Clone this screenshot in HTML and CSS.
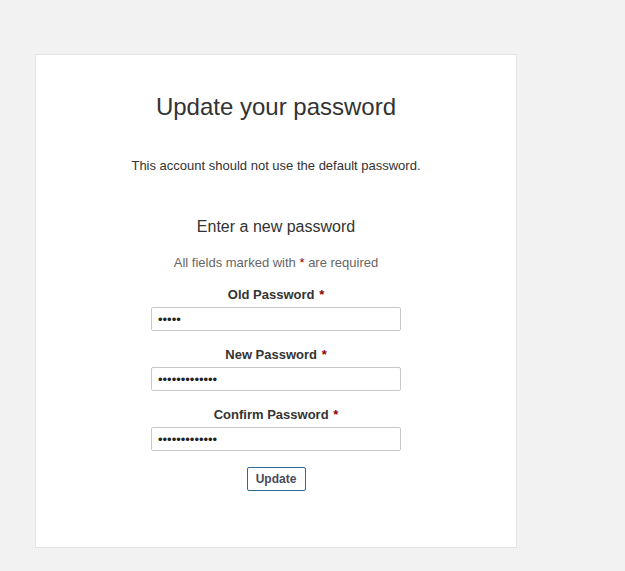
FILE: index.html
```html
<!DOCTYPE html>
<html lang="en">
<head>
<meta charset="utf-8">
<title>Update your password</title>
<link rel="stylesheet" href="styles.css">
</head>
<body>
<div class="card">
  <h1 class="title">Update your password</h1>
  <p class="notice">This account should not use the default password.</p>
  <h2 class="subtitle">Enter a new password</h2>
  <p class="note">All fields marked with <span class="req">*</span> are required</p>
  <form class="form">
    <label class="label" for="old">Old Password <span class="req">*</span></label>
    <input class="field" id="old" type="password" value="aaaaa">
    <label class="label" for="new">New Password <span class="req">*</span></label>
    <input class="field" id="new" type="password" value="aaaaaaaaaaaaa">
    <label class="label" for="confirm">Confirm Password <span class="req">*</span></label>
    <input class="field" id="confirm" type="password" value="aaaaaaaaaaaaa">
    <button class="btn" type="button">Update</button>
  </form>
</div>
</body>
</html>
```
FILE: styles.css
```css
html, body {
  margin: 0;
  padding: 0;
  background: #f2f2f2;
  font-family: "Liberation Sans", Arial, sans-serif;
  color: #333;
}
.card {
  box-sizing: border-box;
  width: 482px;
  height: 494px;
  margin: 54px 0 0 35px;
  padding-top: 38px;
  background: #fff;
  border: 1px solid #e4e4e4;
  display: flex;
  flex-direction: column;
  align-items: center;
  text-align: center;
}
.title {
  margin: 0;
  font-size: 24px;
  line-height: 28px;
  font-weight: normal;
  color: #333;
}
.notice {
  margin: 35px 0 0;
  font-size: 13px;
  line-height: 20px;
  color: #333;
}
.subtitle {
  margin: 40px 0 0;
  font-size: 16px;
  line-height: 22px;
  font-weight: normal;
  color: #333;
}
.note {
  margin: 16px 0 0;
  font-size: 13px;
  line-height: 18px;
  color: #666;
}
.req {
  color: #8b0000;
  font-weight: normal;
}
.label .req {
  font-weight: bold;
  margin-left: 1px;
}
.form {
  margin: 14px 0 0;
  display: flex;
  flex-direction: column;
  align-items: center;
}
.label {
  font-size: 13px;
  line-height: 18px;
  font-weight: bold;
  color: #333;
}
.field {
  box-sizing: border-box;
  width: 250px;
  height: 24px;
  margin: 3px 0 15px;
  padding: 0 6px;
  border: 1px solid #c8c8c8;
  border-radius: 2px;
  font-family: "Liberation Sans", Arial, sans-serif;
  font-size: 13px;
  color: #222;
  background: #fff;
  outline: none;
}
.btn {
  box-sizing: border-box;
  width: 59px;
  height: 24px;
  margin-top: 1px;
  padding: 0;
  border: 1px solid #2a6a98;
  border-radius: 2px;
  background: #fff;
  font-family: "Liberation Sans", Arial, sans-serif;
  font-size: 12px;
  font-weight: bold;
  color: #4a4a5a;
  cursor: pointer;
}
```
